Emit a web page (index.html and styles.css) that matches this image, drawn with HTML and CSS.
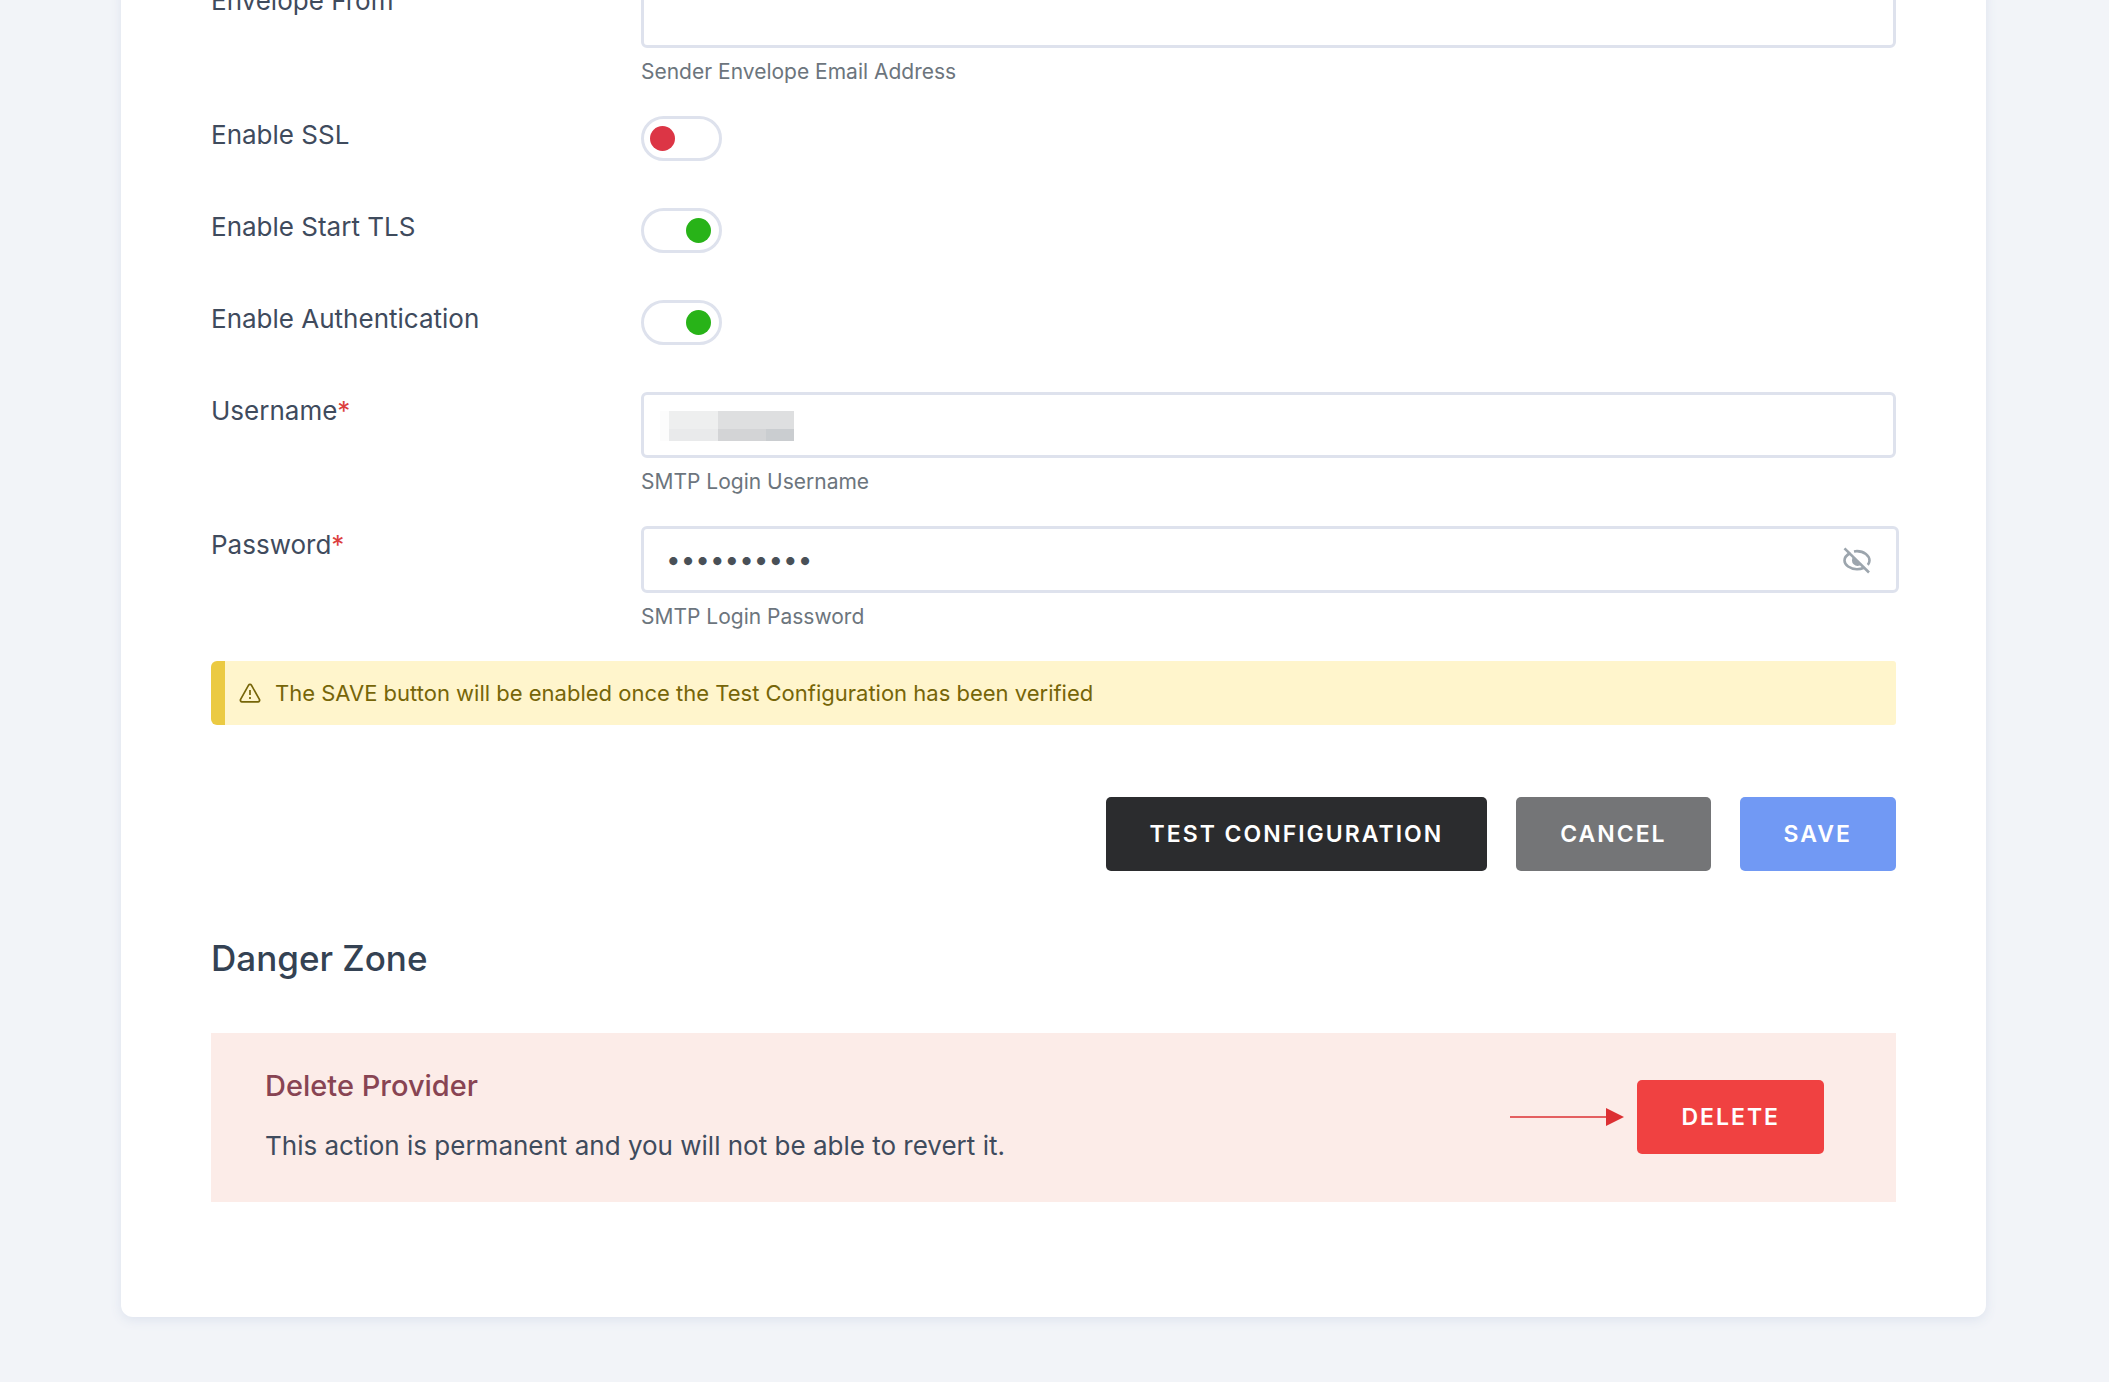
FILE: index.html
```html
<!DOCTYPE html>
<html lang="en">
<head>
<meta charset="utf-8">
<title>SMTP Provider</title>
<link rel="stylesheet" href="styles.css">
</head>
<body>
<main class="card">
  <form class="form">
    <div class="row">
      <label class="label" for="envelope">Envelope From</label>
      <div class="field">
        <input class="input" id="envelope" type="email">
        <p class="hint">Sender Envelope Email Address</p>
      </div>
    </div>
    <div class="row row-switch">
      <label class="label" for="ssl">Enable SSL</label>
      <input class="switch" id="ssl" type="checkbox">
    </div>
    <div class="row row-switch">
      <label class="label" for="tls">Enable Start TLS</label>
      <input class="switch" id="tls" type="checkbox" checked>
    </div>
    <div class="row row-switch">
      <label class="label" for="auth">Enable Authentication</label>
      <input class="switch" id="auth" type="checkbox" checked>
    </div>
    <div class="row">
      <label class="label" for="username">Username<span class="required">*</span></label>
      <div class="field">
        <div class="input-wrap">
          <input class="input" id="username" type="text">
          <svg class="redacted" width="134" height="30" viewBox="0 0 134 30" shape-rendering="crispEdges" aria-hidden="true">
            <path fill="#fcfcfc" d="M0 0h9v30H0z"/>
            <path fill="#eeefef" d="M9 0h49v18H9z"/>
            <path fill="#dedfe0" d="M58 0h76v18H58z"/>
            <path fill="#e9eaeb" d="M9 18h49v12H9z"/>
            <path fill="#d3d4d6" d="M58 18h48v12H58z"/>
            <path fill="#cacdd0" d="M106 18h28v12h-28z"/>
          </svg>
        </div>
        <p class="hint">SMTP Login Username</p>
      </div>
    </div>
    <div class="row">
      <label class="label" for="password">Password<span class="required">*</span></label>
      <div class="field">
        <div class="password-box">
          <input class="password" id="password" type="password" value="smtplogin1">
          <button class="reveal" type="button" aria-label="Show password">
            <svg width="30" height="28" viewBox="0 0 30 28" fill="none" stroke="#9ca5ad" stroke-width="2.600" aria-hidden="true">
              <path d="M8.500 7C4.500 9 2.500 11.800 2.500 14.500c0 4.500 5.500 8.700 12.500 8.700 2.600 0 5-.6 7-1.500"/>
              <path d="M12 5.400c1-.2 2-.3 3-.3 7 0 12.500 4.400 12.500 9.400 0 1.500-.6 3-1.700 4.300"/>
              <path fill="#9ca5ad" stroke="none" d="M11.500 10.500l8 7.700a5 5 0 0 1-8-7.700z"/>
              <path d="M2.500 2.300 27 26.500"/>
            </svg>
          </button>
        </div>
        <p class="hint">SMTP Login Password</p>
      </div>
    </div>
    <div class="notice" role="note">
      <svg width="22" height="20" viewBox="0 0 22 20" fill="none" stroke="#766508" stroke-width="1.700" stroke-linejoin="round" aria-hidden="true">
        <path d="M9.600 2.200a1.600 1.600 0 0 1 2.800 0l8 14.200a1.600 1.600 0 0 1-1.400 2.400H3a1.600 1.600 0 0 1-1.400-2.400z"/>
        <path d="M11 7v5M11 14v2"/>
      </svg>
      <span>The SAVE button will be enabled once the Test Configuration has been verified</span>
    </div>
    <div class="actions">
      <button class="btn btn-dark" type="button">TEST CONFIGURATION</button>
      <button class="btn btn-grey" type="button">CANCEL</button>
      <button class="btn btn-save" type="submit" disabled>SAVE</button>
    </div>
  </form>
  <section>
    <h2 class="danger-title">Danger Zone</h2>
    <div class="danger">
      <div class="danger-text">
        <h3 class="danger-name">Delete Provider</h3>
        <p class="danger-copy">This action is permanent and you will not be able to revert it.</p>
      </div>
      <div class="danger-action">
        <svg width="114" height="18" viewBox="0 0 114 18" aria-hidden="true">
          <path d="M0 9h97" stroke="#dc3033" stroke-width="1.600"/>
          <path d="M96 0v18l18-9z" fill="#dc3033"/>
        </svg>
        <button class="btn btn-red" type="button">DELETE</button>
      </div>
    </div>
  </section>
</main>
</body>
</html>
```
FILE: styles.css
```css
*, *::before, *::after { box-sizing: border-box; }

html { background: #f2f4f8; }

body {
  margin: 0;
  padding: 0 123px 65px 121px;
  overflow: hidden;
  font-family: Inter, "Liberation Sans", sans-serif;
  font-size: 26px;
  line-height: 36px;
  color: #3f4b5d;
  display: flow-root;
}

h2, h3, p { margin: 0; }

button, input { font: inherit; margin: 0; }

.card {
  margin-top: -18px;
  padding: 0 90px 115px;
  background: #fff;
  border-radius: 12px;
  box-shadow: 0 3px 12px #dde3ee;
}

.row {
  display: grid;
  grid-template-columns: 430px 1fr;
  align-items: start;
  margin-bottom: 32px;
}

.row-switch { min-height: 60px; }

.label { line-height: 38px; }

.required { color: #dc3f3f; }

.input-wrap { position: relative; }

.input {
  display: block;
  width: 100%;
  height: 66px;
  padding: 0 24px;
  border: 3px solid #dee2ed;
  border-radius: 6px;
  background: #fff;
  color: #495057;
}

.redacted {
  position: absolute;
  left: 19px;
  top: 19px;
}

.hint {
  padding-top: 11px;
  margin-bottom: -1px;
  font-size: 21px;
  line-height: 26px;
  color: #6c757d;
}

.password-box {
  display: flex;
  align-items: center;
  height: 67px;
  margin-right: -3px;
  padding: 0 24px 0 22px;
  border: 3px solid #dee2ed;
  border-radius: 6px;
}

.password {
  flex: 1;
  min-width: 0;
  padding: 0;
  border: 0;
  outline: 0;
  background: none;
  color: #495057;
}

.reveal {
  display: flex;
  padding: 0;
  border: 0;
  background: none;
}

.switch {
  appearance: none;
  display: flex;
  align-items: center;
  width: 81px;
  height: 45px;
  padding: 0 6px;
  border: 3px solid #dee2ed;
  border-radius: 23px;
  background: #fff;
}

.switch::before {
  content: "";
  width: 25px;
  height: 25px;
  border-radius: 50%;
  background: #dc3545;
}

.switch:checked {
  justify-content: flex-end;
  padding: 0 8px;
}

.switch:checked::before { background: #28b318; }

.notice {
  display: flex;
  align-items: center;
  gap: 14px;
  height: 64px;
  padding-left: 14px;
  border-left: 14px solid #ebca42;
  border-radius: 6px 3px 3px 6px;
  background: #fff5cc;
  color: #766508;
  font-size: 22px;
}

.actions {
  display: flex;
  justify-content: flex-end;
  gap: 29px;
  margin-top: 72px;
}

.btn {
  height: 74px;
  padding: 0 44px;
  border: 0;
  border-radius: 5px;
  color: #fff;
  font-size: 23px;
  font-weight: 600;
  letter-spacing: 2px;
}

.btn-dark { background: #2b2c2e; }
.btn-grey { background: #747577; }
.btn-save { background: #7199f4; }
.btn-red { background: #f04141; }

.danger-title {
  margin-top: 65px;
  font-size: 35px;
  line-height: 44px;
  font-weight: 500;
  color: #344253;
}

.danger {
  display: flex;
  align-items: center;
  justify-content: space-between;
  margin-top: 53px;
  min-height: 169px;
  padding: 28px 72px 30px 54px;
  background: #fcece8;
}

.danger-text { padding-bottom: 2px; }

.danger-name {
  margin-bottom: 24px;
  font-size: 29px;
  line-height: 36px;
  font-weight: 500;
  color: #884453;
}

.danger-action {
  display: flex;
  align-items: center;
  gap: 13px;
}
```
